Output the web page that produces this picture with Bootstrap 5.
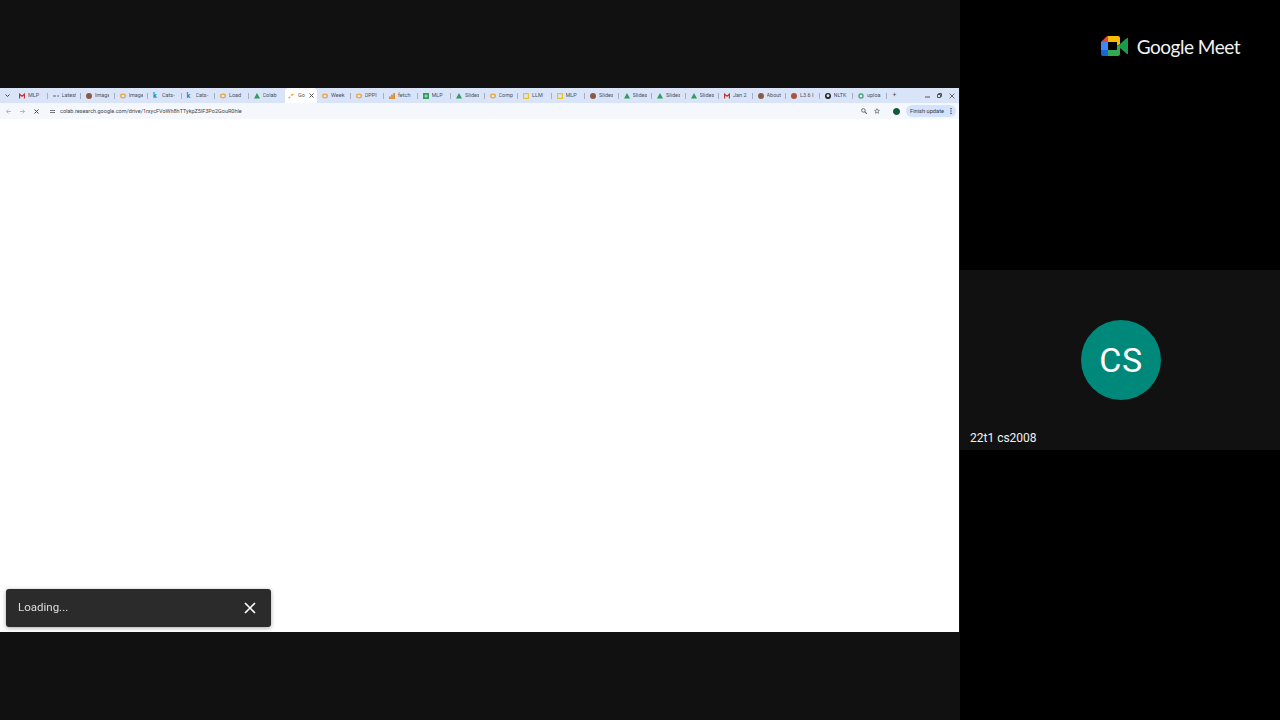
<!DOCTYPE html>
<html lang="en">
<head>
  <meta charset="UTF-8" />
  <meta name="viewport" content="width=device-width, initial-scale=1.0" />
  <title>Google Meet recording</title>
  <link href="https://cdn.jsdelivr.net/npm/bootstrap@5.3.2/dist/css/bootstrap.min.css" rel="stylesheet" />
  <style>
    html, body { height: 100%; }
    body { background: #000; font-family: Roboto, "Liberation Sans", sans-serif; overflow: hidden; }

    .stage { width: 1280px; height: 720px; }
    .share { width: 960px; background: #111; }
    .share-gap { height: 88px; background: #111; }
    .side { width: 320px; background: #000; }
    .side-top { height: 270px; padding: 36px 40px 0 0; }
    .side-tile { height: 180px; background: #111; padding: 50px 0 0 1px; color: #fff; }
    .side-rest { flex: 1; }

    .meet-name { font-family: Lato, "Open Sans", sans-serif; font-size: 19px; line-height: 22px; color: #f1f3f4; margin-left: 9px; letter-spacing: -.5px; }
    .avatar { width: 80px; height: 80px; background: #00897b; font-size: 34px; letter-spacing: .6px; padding-top: 1px; margin-left: 120px; }
    .tile-name { margin: 30px 0 0 9px; font-size: 12px; line-height: 16px; color: #f1f1f1; }

    .browser { height: 544px; width: 959px; background: #fff; position: relative; filter: blur(.4px); }
    .tabstrip { height: 15px; background: #d9e4f9; padding-left: 14px; font-size: 5.5px; color: #4a525e; }
    .tab-item { width: 33.5px; height: 15px; padding-left: 5px; gap: 3px; flex: none; white-space: nowrap; overflow: hidden; position: relative; }
    .tab-item::after { content: ""; position: absolute; right: 0; top: 5px; height: 6px; width: 1px; background: #a3b0c4; }
    .tab-item.is-active { width: 32px; margin-left: 3px; padding-left: 3px; background: #fff; border-radius: 4px 4px 0 0; }
    .tab-item.is-active::after, .tab-item.no-sep::after { display: none; }
    .tab-text { overflow: hidden; width: 14px; }
    .tab-text.is-short { width: 7px; margin-left: 1px; }
    .fav { width: 6px; height: 6px; flex: none; }
    .fav-k { line-height: 6px; font-size: 7px; color: #2a7fc4; }
    .tab-close { width: 5px; height: 5px; margin-left: 1px; flex: none; }
    .strip-menu { position: absolute; left: 5px; top: 5px; }
    .strip-plus { margin-left: 6px; font-size: 7px; }
    .win-ctrl { position: absolute; right: 4px; top: 0; height: 15px; gap: 7px; }

    .toolbar { height: 16px; background: #f4f7fc; font-size: 5.5px; color: #5f6368; padding: 0 3px 0 6px; }
    .nav-slot { width: 14px; flex: none; }
    .tune { margin-left: 2px; width: 5px; height: 5px; }
    .addr-url { margin-left: 5px; color: #424850; }
    .star-icon { margin: 0 13px 0 7px; }
    .profile { width: 7px; height: 7px; background: #0f5c3d; border: 1.5px solid #0b4a30; }
    .update-pill { height: 12px; padding: 0 4px 0 4px; background: #d3e3fd; color: #333a45; margin-left: 6px; width: 50px; font-size: 5.7px; }

    .toast-box { position: absolute; left: 6px; top: 501px; width: 265px; height: 38px; background: #2b2b2b; border-radius: 3px; box-shadow: 0 1px 4px rgba(0,0,0,.35); padding: 0 15px 0 12px; color: #dedede; font-size: 11.5px; }
  </style>
</head>
<body>
  <div class="stage d-flex">
    <!-- screen share -->
    <div class="share d-flex flex-column">
      <div class="share-gap"></div>
      <div class="browser d-flex flex-column">
        <div class="tabstrip d-flex align-items-center position-relative">
          <svg class="strip-menu" width="5" height="5" viewBox="0 0 10 10"><path d="M1 3l4 4 4-4" fill="none" stroke="#444" stroke-width="2"/></svg>
          <div class="tab-item d-flex align-items-center"><svg class="fav" viewBox="0 0 10 10"><path d="M1 9V2l4 3.500 4-3.500v7" fill="none" stroke="#c5362c" stroke-width="2"/></svg><span class="tab-text">MLP</span></div>
          <div class="tab-item d-flex align-items-center"><svg class="fav" viewBox="0 0 10 10"><path d="M0 5h5M7 5h3" stroke="#5f6368" stroke-width="2"/></svg><span class="tab-text">Latest</span></div>
          <div class="tab-item d-flex align-items-center"><svg class="fav" viewBox="0 0 10 10"><circle cx="5" cy="5" r="5" fill="#8a5a44"/></svg><span class="tab-text">Image</span></div>
          <div class="tab-item d-flex align-items-center"><svg class="fav" viewBox="0 0 10 10"><ellipse cx="5" cy="5" rx="4" ry="3" fill="none" stroke="#e8a33a" stroke-width="2"/></svg><span class="tab-text">Image</span></div>
          <div class="tab-item d-flex align-items-center"><span class="fav fav-k fw-bold">k</span><span class="tab-text">Cats-</span></div>
          <div class="tab-item d-flex align-items-center"><span class="fav fav-k fw-bold">k</span><span class="tab-text">Cats-</span></div>
          <div class="tab-item d-flex align-items-center"><svg class="fav" viewBox="0 0 10 10"><ellipse cx="5" cy="5" rx="4" ry="3" fill="none" stroke="#e8a33a" stroke-width="2"/></svg><span class="tab-text">Load</span></div>
          <div class="tab-item no-sep d-flex align-items-center"><svg class="fav" viewBox="0 0 10 10"><path d="M5 0l5 9H0z" fill="#2f9e5b"/></svg><span class="tab-text">Colab</span></div>
          <div class="tab-item is-active d-flex align-items-center"><svg class="fav" viewBox="0 0 10 10"><path d="M1 8l3-1M5 4l4-2" stroke="#e8a33a" stroke-width="2.400"/></svg><span class="tab-text is-short">Go</span><svg class="tab-close" viewBox="0 0 10 10"><path d="M1 1l8 8M9 1l-8 8" stroke="#555" stroke-width="2"/></svg></div>
          <div class="tab-item d-flex align-items-center"><svg class="fav" viewBox="0 0 10 10"><ellipse cx="5" cy="5" rx="4" ry="3" fill="none" stroke="#e8a33a" stroke-width="2"/></svg><span class="tab-text">Week</span></div>
          <div class="tab-item d-flex align-items-center"><svg class="fav" viewBox="0 0 10 10"><ellipse cx="5" cy="5" rx="4" ry="3" fill="none" stroke="#e8a33a" stroke-width="2"/></svg><span class="tab-text">OPPI</span></div>
          <div class="tab-item d-flex align-items-center"><svg class="fav" viewBox="0 0 10 10"><path d="M0 6h3v4H0zM3.500 3h3v7h-3zM7 0h3v10H7z" fill="#e08a2c"/></svg><span class="tab-text">fetch</span></div>
          <div class="tab-item d-flex align-items-center"><svg class="fav" viewBox="0 0 10 10"><rect width="10" height="10" fill="#2f9e5b"/><path d="M2 5h6M5 2v6" stroke="#fff"/></svg><span class="tab-text">MLP</span></div>
          <div class="tab-item d-flex align-items-center"><svg class="fav" viewBox="0 0 10 10"><path d="M5 0l5 9H0z" fill="#2f9e5b"/></svg><span class="tab-text">Slides</span></div>
          <div class="tab-item d-flex align-items-center"><svg class="fav" viewBox="0 0 10 10"><ellipse cx="5" cy="5" rx="4" ry="3" fill="none" stroke="#e8a33a" stroke-width="2"/></svg><span class="tab-text">Comp</span></div>
          <div class="tab-item d-flex align-items-center"><svg class="fav" viewBox="0 0 10 10"><rect x="1" y="1" width="8" height="8" fill="none" stroke="#e9bf2c" stroke-width="2"/></svg><span class="tab-text">LLM</span></div>
          <div class="tab-item d-flex align-items-center"><svg class="fav" viewBox="0 0 10 10"><rect x="1" y="1" width="8" height="8" fill="none" stroke="#e9bf2c" stroke-width="2"/></svg><span class="tab-text">MLP</span></div>
          <div class="tab-item d-flex align-items-center"><svg class="fav" viewBox="0 0 10 10"><circle cx="5" cy="5" r="5" fill="#8a5a44"/></svg><span class="tab-text">Slides</span></div>
          <div class="tab-item d-flex align-items-center"><svg class="fav" viewBox="0 0 10 10"><path d="M5 0l5 9H0z" fill="#2f9e5b"/></svg><span class="tab-text">Slides</span></div>
          <div class="tab-item d-flex align-items-center"><svg class="fav" viewBox="0 0 10 10"><path d="M5 0l5 9H0z" fill="#2f9e5b"/></svg><span class="tab-text">Slides</span></div>
          <div class="tab-item d-flex align-items-center"><svg class="fav" viewBox="0 0 10 10"><path d="M5 0l5 9H0z" fill="#2f9e5b"/></svg><span class="tab-text">Slides</span></div>
          <div class="tab-item d-flex align-items-center"><svg class="fav" viewBox="0 0 10 10"><path d="M1 9V2l4 3.500 4-3.500v7" fill="none" stroke="#c5362c" stroke-width="2"/></svg><span class="tab-text">Jan 2</span></div>
          <div class="tab-item d-flex align-items-center"><svg class="fav" viewBox="0 0 10 10"><circle cx="5" cy="5" r="5" fill="#8a5a44"/></svg><span class="tab-text">About</span></div>
          <div class="tab-item d-flex align-items-center"><svg class="fav" viewBox="0 0 10 10"><circle cx="5" cy="5" r="5" fill="#a8553f"/></svg><span class="tab-text">L3.6 I</span></div>
          <div class="tab-item d-flex align-items-center"><svg class="fav" viewBox="0 0 10 10"><circle cx="5" cy="5" r="5" fill="#222"/><circle cx="5" cy="4.500" r="2.400" fill="#d9e4f9"/></svg><span class="tab-text">NLTK</span></div>
          <div class="tab-item d-flex align-items-center"><svg class="fav" viewBox="0 0 10 10"><circle cx="5" cy="5" r="3.500" fill="none" stroke="#3d9f6a" stroke-width="2"/></svg><span class="tab-text">uploa</span></div>
          <span class="strip-plus">+</span>
          <div class="win-ctrl d-flex align-items-center">
            <svg width="5" height="5" viewBox="0 0 10 10"><path d="M0 8h10" stroke="#555" stroke-width="2"/></svg>
            <svg width="5" height="5" viewBox="0 0 10 10"><path d="M1 3h6v6H1zM3 3V1h6v6H7" fill="none" stroke="#555" stroke-width="2"/></svg>
            <svg width="6" height="6" viewBox="0 0 10 10"><path d="M1 1l8 8M9 1l-8 8" stroke="#555" stroke-width="1.500"/></svg>
          </div>
        </div>
        <div class="toolbar d-flex align-items-center">
          <div class="nav-slot"><svg width="5" height="5" viewBox="0 0 10 10" class="d-block"><path d="M10 5H1M5 1L1 5l4 4" fill="none" stroke="#a0a4aa" stroke-width="1.500"/></svg></div>
          <div class="nav-slot"><svg width="5" height="5" viewBox="0 0 10 10" class="d-block"><path d="M0 5h9M5 1l4 4-4 4" fill="none" stroke="#a0a4aa" stroke-width="1.500"/></svg></div>
          <div class="nav-slot"><svg width="5" height="5" viewBox="0 0 10 10" class="d-block"><path d="M1 1l8 8M9 1l-8 8" stroke="#444" stroke-width="2"/></svg></div>
          <svg class="tune" viewBox="0 0 10 10"><path d="M0 3h10M0 7h10" stroke="#555" stroke-width="1.600"/></svg>
          <span class="addr-url flex-grow-1">colab.research.google.com/drive/1rxycFVoWh8hTTykpZ5lF3Po2GouR0hle</span>
          <svg width="6" height="6" viewBox="0 0 10 10"><circle cx="4" cy="4" r="3" fill="none" stroke="#666" stroke-width="1.600"/><path d="M6 6l4 4" stroke="#666" stroke-width="1.800"/></svg>
          <svg class="star-icon" width="6" height="6" viewBox="0 0 10 10"><path d="M5 1l1.200 2.700 2.800.3-2.100 1.900.6 2.900L5 7.400 2.500 8.800l.6-2.900L1 4l2.800-.3z" fill="none" stroke="#555" stroke-width="1.100"/></svg>
          <span class="profile rounded-circle d-block"></span>
          <div class="update-pill rounded-pill d-flex align-items-center justify-content-between"><span>Finish update</span><svg width="2" height="6" viewBox="0 0 2 10"><path d="M1 0v2M1 4v2M1 8v2" stroke="#333" stroke-width="2"/></svg></div>
        </div>
        <div class="flex-grow-1"></div>
        <div class="toast-box d-flex align-items-center justify-content-between">
          <span>Loading...</span>
          <svg width="12" height="12" viewBox="0 0 12 12"><path d="M1 1l10 10M11 1L1 11" stroke="#fff" stroke-width="1.700"/></svg>
        </div>
      </div>
      <div class="share-gap"></div>
    </div>

    <!-- participant column -->
    <div class="side d-flex flex-column">
      <div class="side-top d-flex justify-content-end align-items-start">
        <svg width="27" height="20" viewBox="0 0 27 20">
          <path d="M0 6L6 0h1v6z" fill="#ea4335"/>
          <path d="M0 6h7v8H0z" fill="#4285f4"/>
          <path d="M0 14h7v6H2a2 2 0 0 1-2-2z" fill="#1967d2"/>
          <path d="M7 0h10a2 2 0 0 1 2 2v6l-3 2V6H7z" fill="#fbbc04"/>
          <path d="M7 14h9v-4h3v8a2 2 0 0 1-2 2H7z" fill="#34a853"/>
          <path d="M16 10l3-2 7-6a.6.6 0 0 1 1 .5v15a.6.6 0 0 1-1 .5l-7-6v-2z" fill="#1a9a4b"/>
        </svg>
        <span class="meet-name">Google Meet</span>
      </div>
      <div class="side-tile">
        <div class="avatar rounded-circle d-flex align-items-center justify-content-center">CS</div>
        <div class="tile-name">22t1 cs2008</div>
      </div>
      <div class="side-rest"></div>
    </div>
  </div>
  <script src="https://cdn.jsdelivr.net/npm/bootstrap@5.3.2/dist/js/bootstrap.bundle.min.js"></script>
</body>
</html>
